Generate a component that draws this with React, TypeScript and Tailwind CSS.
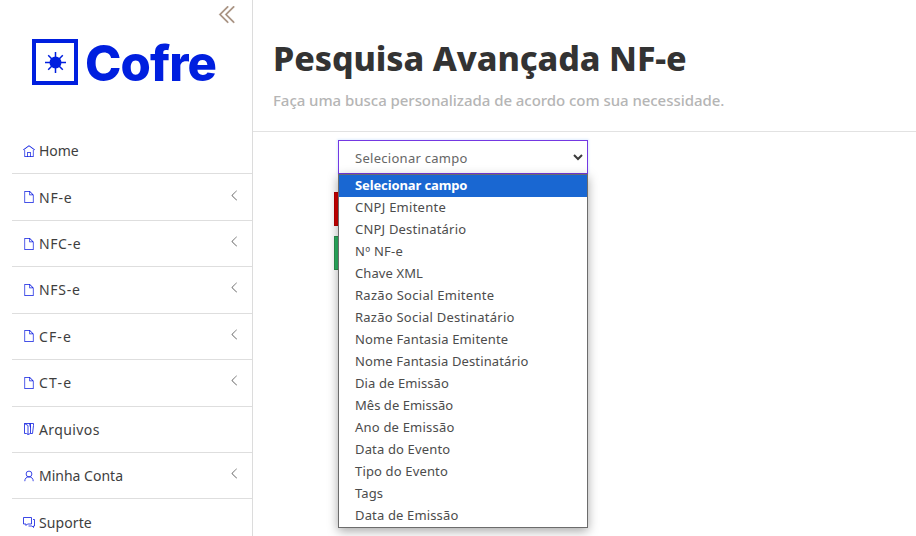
import type { ComponentType, ReactNode } from "react";
import { TfiHome, TfiFile, TfiAngleLeft, TfiAngleDoubleLeft } from "react-icons/tfi";

type IconProps = { className?: string };
type Item = { label: string; icon: ComponentType<IconProps>; nested?: boolean; tracking: string };

function LineIcon({ className, children }: IconProps & { children: ReactNode }) {
  return (
    <svg viewBox="0 0 12 12" className={className} fill="none" stroke="currentColor" strokeWidth="0.8">
      {children}
    </svg>
  );
}

function FoldersIcon({ className }: IconProps) {
  return (
    <LineIcon className={className}>
      <path d="M1.500 .5h9v2l-1 8H7.500M1.500 .5v10H3.500M1.500 .5l3.500 2v9L3.500 10.500M7.500 .5v10l-2.500 1M7.500 4.500l-1-4" />
    </LineIcon>
  );
}

function UserIcon({ className }: IconProps) {
  return (
    <LineIcon className={className}>
      <circle cx="6" cy="4" r="2.900" />
      <path d="M1.800 11.200c0-2.700 1.500-4.300 4.200-4.300s4.200 1.600 4.200 4.300" />
    </LineIcon>
  );
}

function CommentsIcon({ className }: IconProps) {
  return (
    <LineIcon className={className}>
      <path d="M.5 1.500h8v6.500h-4l-1.500 1.500V8H.5z" />
      <path d="M10 3.500h1.500V10h-1v1.500L9 10H5.500" />
    </LineIcon>
  );
}

const items: Item[] = [
  { label: "Home", icon: TfiHome, tracking: "tracking-[-0.1px]" },
  { label: "NF-e", icon: TfiFile, nested: true, tracking: "tracking-[0.8px]" },
  { label: "NFC-e", icon: TfiFile, nested: true, tracking: "tracking-[0.6px]" },
  { label: "NFS-e", icon: TfiFile, nested: true, tracking: "tracking-[0.7px]" },
  { label: "CF-e", icon: TfiFile, nested: true, tracking: "tracking-[1.1px]" },
  { label: "CT-e", icon: TfiFile, nested: true, tracking: "tracking-[1.2px]" },
  { label: "Arquivos", icon: FoldersIcon, tracking: "tracking-[0.4px]" },
  { label: "Minha Conta", icon: UserIcon, nested: true, tracking: "tracking-[0px]" },
  { label: "Suporte", icon: CommentsIcon, tracking: "tracking-[0.1px]" },
];

const options: [string, string][] = [
  ["CNPJ Emitente", "tracking-[0.25px]"],
  ["CNPJ Destinatário", "tracking-[0.2px]"],
  ["Nº NF-e", "tracking-[0.25px]"],
  ["Chave XML", "tracking-[0.1px]"],
  ["Razão Social Emitente", "tracking-[0.28px]"],
  ["Razão Social Destinatário", "tracking-[0.24px]"],
  ["Nome Fantasia Emitente", "tracking-[0.16px]"],
  ["Nome Fantasia Destinatário", "tracking-[0.14px]"],
  ["Dia de Emissão", "tracking-[0.1px]"],
  ["Mês de Emissão", "tracking-[0.03px]"],
  ["Ano de Emissão", "tracking-[0.2px]"],
  ["Data do Evento", "tracking-[0.15px]"],
  ["Tipo do Evento", "tracking-[0.15px]"],
  ["Tags", "tracking-[0.1px]"],
  ["Data de Emissão", "tracking-[0.15px]"],
];

function Logo() {
  return (
    <div className="ml-8 mt-[8px] flex h-[52px] items-center text-[#001fdf]">
      <svg viewBox="0 0 46 46" className="h-[46px] w-[46px] shrink-0" fill="none" stroke="currentColor">
        <rect x="2" y="2" width="42" height="42" strokeWidth="4" />
        <circle cx="23.5" cy="23.5" r="6" fill="currentColor" stroke="none" />
        <path
          strokeWidth="1.5"
          d="M23.5 13v21M13 23.5h21M16.2 16.2l14.6 14.6M30.8 16.2L16.2 30.8"
        />
      </svg>
      <span className="ml-[7px] pt-[3px] font-['Inter',sans-serif] text-[49px] leading-[52px] font-extrabold tracking-[-0.9px]">
        Cofre
      </span>
    </div>
  );
}

function Sidebar() {
  return (
    <aside className="flex h-full w-[253px] shrink-0 flex-col border-r border-[#dcdcdc] pl-3">
      <div className="flex h-7 shrink-0 justify-end pr-[14px] pt-1">
        <TfiAngleDoubleLeft className="h-[21px] w-[21px] text-[#a28a78]" strokeWidth="0.4" />
      </div>
      <div className="-ml-3 h-[99.97px] shrink-0">
        <Logo />
      </div>
      <nav>
        {items.map(({ label, icon: Icon, nested, tracking }) => (
          <a
            key={label}
            className="flex h-[46.43px] items-center border-b border-[#dedede] pl-[11px] text-[14px] text-[#3e3e3e]"
          >
            <Icon className="h-3 w-3 shrink-0 text-[#0b1be0]" />
            <span className={`ml-1 grow whitespace-nowrap ${tracking}`}>{label}</span>
            {nested && <TfiAngleLeft className="mr-3 mb-1 h-[11px] w-[11px] text-[#555]" />}
          </a>
        ))}
      </nav>
    </aside>
  );
}

function FieldSelect() {
  return (
    <div className="relative h-[34px] w-[250px] border border-[#7438e2] bg-white shadow-[0_0_2px_1px_rgba(0,123,255,0.12)]">
      <div className="flex h-full items-center justify-between pl-4 pr-1 text-[13px] text-[#666]">
        <span className="pt-[3px] tracking-[0.28px]">Selecionar campo</span>
        <svg viewBox="0 0 10 7" className="h-[7px] w-[10px]" fill="none" stroke="#3b3b3b" strokeWidth="2">
          <path d="M1 1l4 4 4-4" />
        </svg>
      </div>
      <ul className="absolute -left-px top-[33px] w-[250px] border border-[#6c6c6c] bg-white text-[13px] leading-[20px] text-[#4c4c4c] shadow-[0_3px_10px_rgba(0,0,0,0.35)]">
        <li className="h-[22px] bg-[#1967d2] pl-4 font-bold tracking-[-0.12px] text-white">Selecionar campo</li>
        {options.map(([label, tracking]) => (
          <li key={label} className={`h-[22px] whitespace-nowrap pl-4 ${tracking}`}>
            {label}
          </li>
        ))}
      </ul>
    </div>
  );
}

export default function App() {
  return (
    <div className="flex h-[536px] w-[916px] overflow-hidden bg-white font-['Noto_Sans',sans-serif]">
      <Sidebar />
      <main className="min-w-0 grow">
        <header className="h-[132px] border-b border-[#e2e2e2] pl-5 pt-[35px]">
          <h1 className="text-[34px] leading-[46px] font-extrabold tracking-[-0.1px] whitespace-nowrap text-[#333]">
            Pesquisa Avançada NF-e
          </h1>
          <p className="mt-[7px] text-[15px] leading-6 font-medium tracking-[-0.05px] whitespace-nowrap text-[#b5b5b5]">
            Faça uma busca personalizada de acordo com sua necessidade.
          </p>
        </header>
        <section className="flex flex-col pl-[81px] pt-2">
          <div className="relative z-10 ml-1">
            <FieldSelect />
          </div>
          <div className="mt-[18px] h-[34px] w-20 border border-[#b50000] bg-[#d40000]" />
          <div className="mt-[10px] h-[34px] w-20 border border-[#2f8f4e] bg-[#2bb563]" />
        </section>
      </main>
    </div>
  );
}
